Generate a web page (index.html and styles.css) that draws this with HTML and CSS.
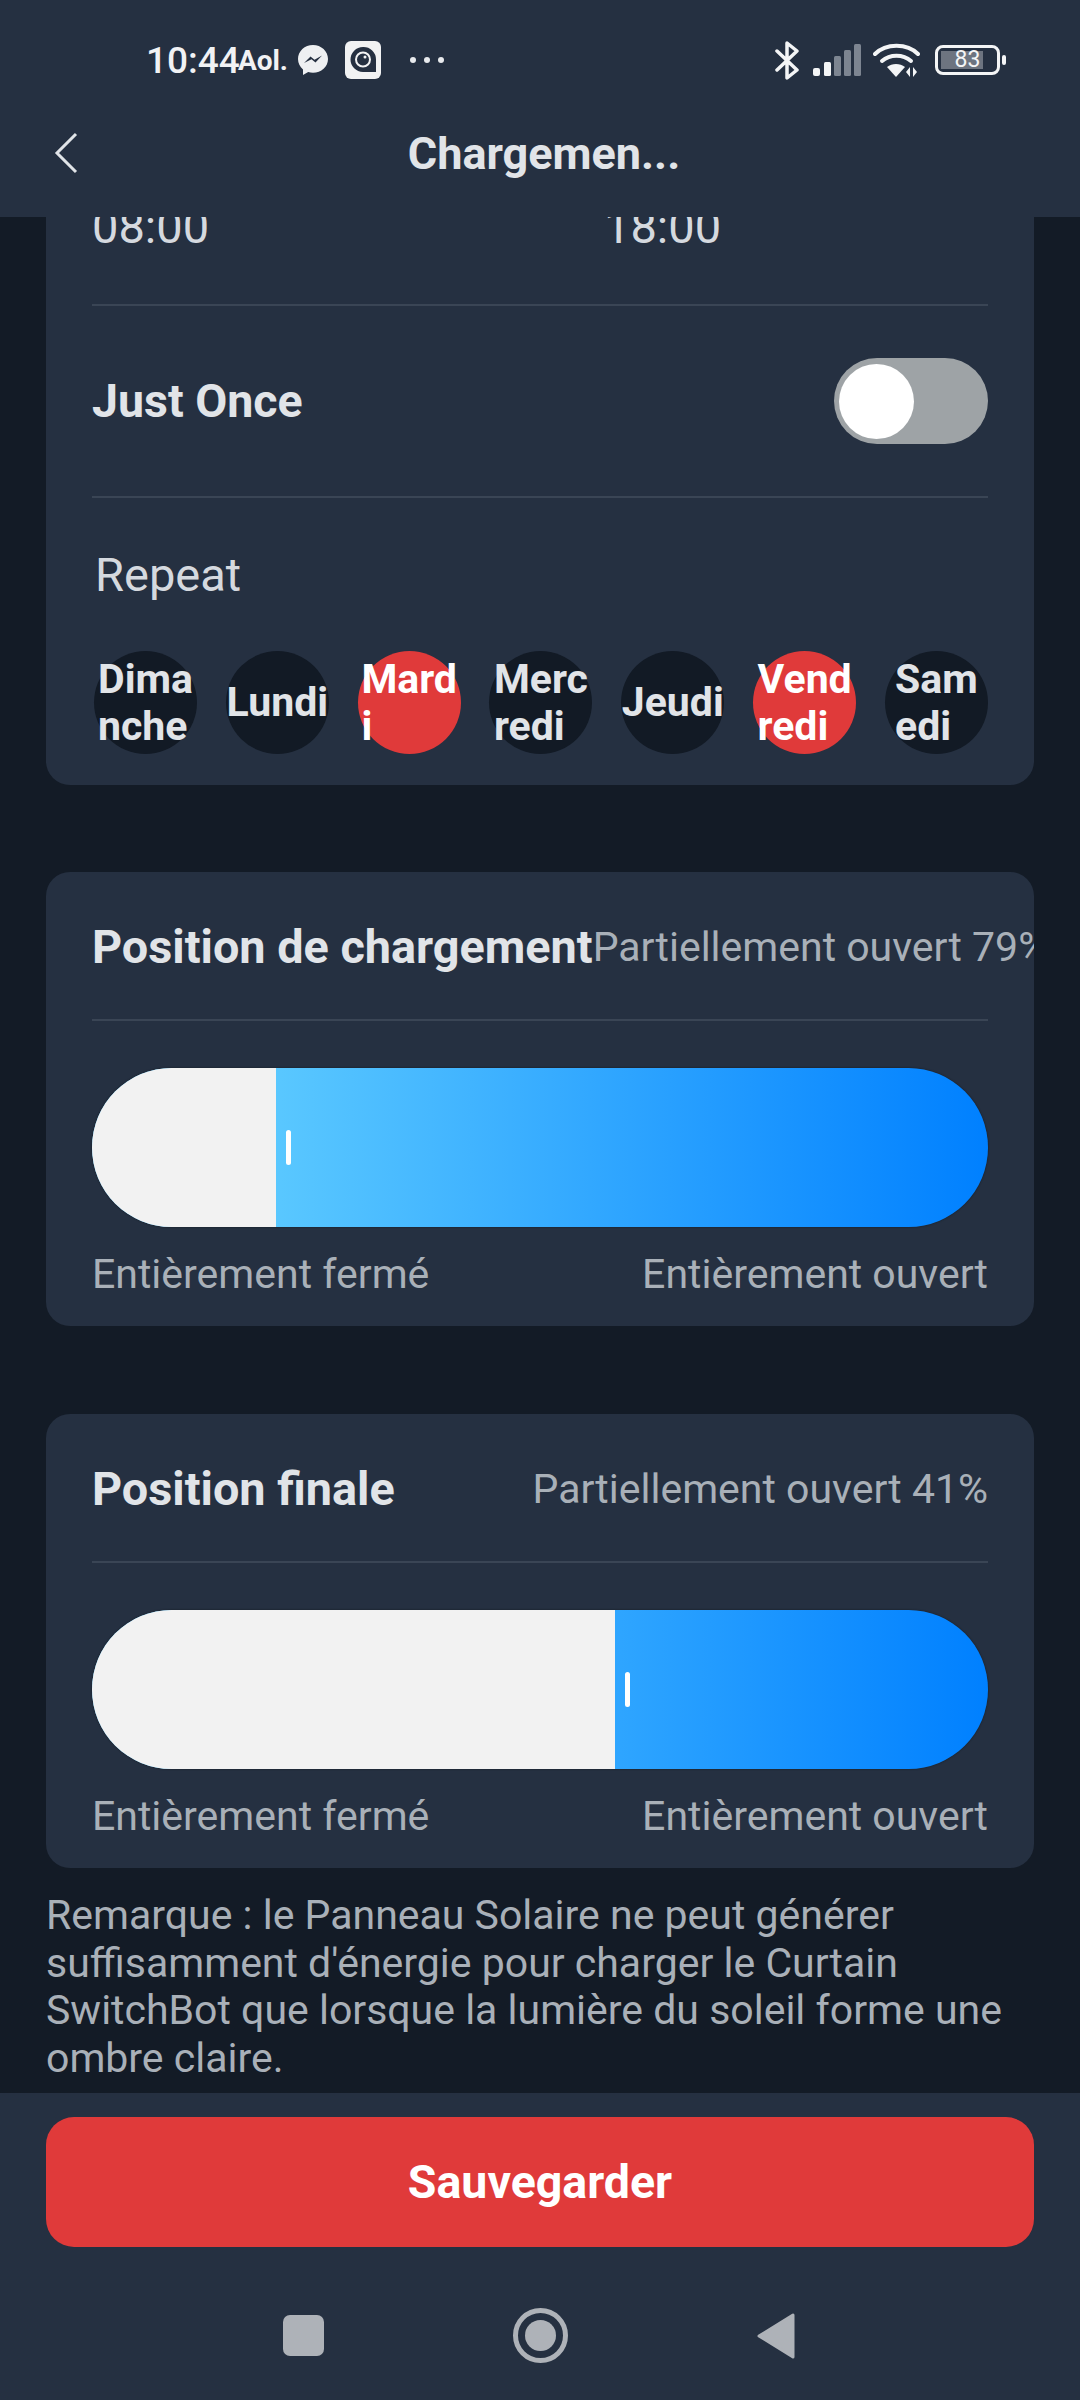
FILE: index.html
```html
<!DOCTYPE html>
<html lang="fr">
    <head>
        <meta charset="UTF-8" />
        <meta name="viewport" content="width=device-width, initial-scale=1.0" />
        <title>Chargement</title>
        <link rel="stylesheet" href="styles.css">
    </head>
    <body>
        <header class="top">
            <div class="status">
                <span class="clock">10:44</span>
                <span class="aol">Aol.</span>
                <svg class="ic-messenger" viewBox="0 0 32 32">
                    <path d="M16 1C7.7 1 1 7.2 1 15c0 4.2 1.9 7.800 5 10.400V31l5.200-2.900c1.500.5 3.100.7 4.800.7 8.300 0 15-6.100 15-13.800S24.300 1 16 1z" fill="#eef0f2"/>
                    <path d="M7 19l6.500-6.500 4 3.300L25 11.500l-6.500 7-4-3.300z" fill="#253041"/>
                </svg>
                <svg class="ic-app" viewBox="0 0 36 38">
                    <rect width="36" height="38" rx="6" fill="#f1f2f3"/>
                    <path d="M18 6a12.500 12.500 0 1 0 0 25h13V18.500A12.500 12.500 0 0 0 18 6z" fill="#253041"/>
                    <circle cx="18" cy="18.500" r="7" fill="none" stroke="#f1f2f3" stroke-width="2"/>
                    <circle cx="20" cy="16" r="1.500" fill="#f1f2f3"/>
                </svg>
                <span class="dots"><i></i><i></i><i></i></span>
                <span class="status-right">
                    <svg class="ic-bt" viewBox="0 0 25 39">
                        <path d="M2 10l20 19-10 8V2l10 8L2 29" fill="none" stroke="#f4f5f6" stroke-width="3.500" stroke-linejoin="round" stroke-linecap="round"/>
                    </svg>
                    <svg class="ic-signal" viewBox="0 0 48 32">
                        <rect x="0" y="24" width="7" height="8" rx="2" fill="#f4f5f6"/>
                        <rect x="11" y="18" width="7" height="14" rx="1.500" fill="#f4f5f6"/>
                        <rect x="21" y="12" width="7" height="20" rx="1.500" fill="#7d8591"/>
                        <rect x="31" y="6" width="7" height="26" rx="1.500" fill="#7d8591"/>
                        <rect x="41" y="0" width="7" height="32" rx="1.500" fill="#7d8591"/>
                    </svg>
                    <svg class="ic-wifi" viewBox="0 0 47 36">
                        <g fill="none" stroke="#f4f5f6" stroke-width="4" stroke-linecap="round">
                            <path d="M2 12C13 1 34 1 45 12"/>
                            <path d="M9 19c8-7 21-7 29 0"/>
                        </g>
                        <path d="M14 25c5-4 13-4 18 0l-9 10z" fill="#f4f5f6"/>
                        <path d="M37 25v10l-4-5zM40 25v10l4-5z" fill="#f4f5f6"/>
                    </svg>
                    <span class="battery"><span class="battery-level">83</span></span>
                    <span class="battery-nub"></span>
                </span>
            </div>
            <div class="bar">
                <svg class="back" viewBox="0 0 24 42">
                    <path d="M22 2L3 21l19 19" fill="none" stroke="#e1e4e8" stroke-width="3"/>
                </svg>
                <h1>Chargemen...</h1>
            </div>
        </header>

        <main class="scroll">
            <section class="card card-first">
                <div class="times">
                    <span>08:00</span>
                    <span>18:00</span>
                </div>
                <div class="once">
                    <span class="once-label">Just Once</span>
                    <span class="toggle"><span class="knob"></span></span>
                </div>
                <div class="repeat">Repeat</div>
                <div class="days">
                    <span class="day"><span>Dima<br>nche</span></span>
                    <span class="day"><span>Lundi</span></span>
                    <span class="day on"><span>Mard<br>i</span></span>
                    <span class="day"><span>Merc<br>redi</span></span>
                    <span class="day"><span>Jeudi</span></span>
                    <span class="day on"><span>Vend<br>redi</span></span>
                    <span class="day"><span>Sam<br>edi</span></span>
                </div>
            </section>

            <section class="card">
                <div class="pos-head">
                    <span class="pos-title">Position de chargement</span>
                    <span class="pos-value">Partiellement ouvert 79%</span>
                </div>
                <div class="slider">
                    <div class="slider-closed" style="width: 184px"></div>
                    <div class="handle"></div>
                </div>
                <div class="slider-labels">
                    <span>Entièrement fermé</span>
                    <span>Entièrement ouvert</span>
                </div>
            </section>

            <section class="card">
                <div class="pos-head">
                    <span class="pos-title">Position finale</span>
                    <span class="pos-value">Partiellement ouvert 41%</span>
                </div>
                <div class="slider">
                    <div class="slider-closed" style="width: 523px"></div>
                    <div class="handle"></div>
                </div>
                <div class="slider-labels">
                    <span>Entièrement fermé</span>
                    <span>Entièrement ouvert</span>
                </div>
            </section>

            <p class="note">Remarque : le Panneau Solaire ne peut générer suffisamment d'énergie pour charger le Curtain SwitchBot que lorsque la lumière du soleil forme une ombre claire.</p>
        </main>

        <footer class="bottom">
            <button class="save">Sauvegarder</button>
            <div class="nav">
                <span class="nav-square"></span>
                <span class="nav-home"><span></span></span>
                <svg class="nav-back" viewBox="0 0 38 46">
                    <path d="M36 2v42L2 23z" fill="#aeb2b8" stroke="#aeb2b8" stroke-width="3" stroke-linejoin="round"/>
                </svg>
            </div>
        </footer>
    </body>
</html>
```

FILE: styles.css
```css
* {
    box-sizing: border-box;
}
html, body {
    margin: 0;
    height: 2400px;
}
body {
    font-family: Roboto, "Liberation Sans", sans-serif;
    background: #131b26;
    color: #e1e4e8;
    display: flex;
    flex-direction: column;
    overflow: hidden;
}

/* status bar + title */
.top {
    background: #253041;
    height: 217px;
    flex: none;
    position: relative;
    z-index: 1;
}
.status {
    height: 120px;
    padding-left: 146px;
    display: flex;
    align-items: center;
    color: #f1f2f4;
}
.clock {
    font-size: 37px;
    font-weight: 500;
    width: 92px;
}
.aol {
    font-size: 28px;
    font-weight: 700;
    width: 59px;
}
.ic-messenger {
    width: 32px;
    height: 32px;
}
.ic-app {
    width: 36px;
    height: 38px;
    margin-left: 16px;
}
.dots {
    display: flex;
    gap: 8px;
    margin-left: 29px;
}
.dots i {
    width: 6px;
    height: 6px;
    border-radius: 50%;
    background: #e8eaed;
}
.status-right {
    display: flex;
    align-items: center;
    margin-left: 331px;
}
.ic-bt {
    width: 25px;
    height: 39px;
}
.ic-signal {
    width: 48px;
    height: 32px;
    margin-left: 13px;
}
.ic-wifi {
    width: 47px;
    height: 36px;
    margin-left: 12px;
}
.battery {
    width: 65px;
    height: 30px;
    margin-left: 15px;
    border: 3px solid #f4f5f6;
    border-radius: 8px;
    padding: 3px;
    display: flex;
}
.battery-level {
    width: 53px;
    background: linear-gradient(90deg, #6d7480 42px, transparent 42px);
    font-size: 23px;
    line-height: 18px;
    text-align: center;
    color: #f4f5f6;
}
.battery-nub {
    width: 4px;
    height: 10px;
    margin-left: 2px;
    border-radius: 2px;
    background: #f4f5f6;
}
.bar {
    height: 66px;
    display: flex;
    align-items: center;
    justify-content: center;
    position: relative;
}
.back {
    position: absolute;
    left: 54px;
    top: 12px;
    width: 24px;
    height: 42px;
}
h1 {
    margin: 0;
    padding-left: 8px;
    font-size: 45px;
    font-weight: 700;
    color: #e1e4e8;
}

/* scrolled content */
.scroll {
    flex: 1;
    min-height: 0;
    padding: 0 46px;
}
.card {
    background: #253041;
    border-radius: 24px;
    margin-bottom: 88px;
    padding: 0 46px 28px;
    overflow: hidden;
}
.card-first {
    margin-top: -40px;
    padding-bottom: 31px;
    margin-bottom: 87px;
}
.card:nth-of-type(3) {
    margin-bottom: 0;
}
.times {
    height: 129px;
    padding-top: 24px;
    border-bottom: 2px solid #3a4555;
    display: grid;
    grid-template-columns: 512px 1fr;
    font-size: 47px;
    line-height: 52px;
    color: #d5d9df;
}
.once {
    height: 192px;
    border-bottom: 2px solid #3a4555;
    display: flex;
    align-items: center;
    justify-content: space-between;
}
.once-label {
    font-size: 46.500px;
    font-weight: 700;
}
.toggle {
    width: 154px;
    height: 86px;
    border-radius: 43px;
    background: #9ea3a6;
    padding: 6px 5px;
}
.knob {
    display: block;
    width: 75px;
    height: 75px;
    border-radius: 50%;
    background: #fff;
}
.repeat {
    padding: 52px 0 0 3px;
    font-size: 47px;
    line-height: 50px;
    color: #d5d9df;
}
.days {
    margin-top: 51px;
    display: flex;
    justify-content: space-between;
    margin-left: 2px;
}
.day {
    width: 103px;
    height: 103px;
    border-radius: 50%;
    background: #121a25;
    display: flex;
    align-items: center;
    justify-content: center;
    font-size: 41px;
    font-weight: 700;
    line-height: 47px;
    white-space: nowrap;
}
.day.on {
    background: #e03a3a;
    color: #fff;
}
.pos-head {
    height: 149px;
    padding-top: 2px;
    border-bottom: 2px solid #3a4555;
    display: flex;
    align-items: center;
    justify-content: space-between;
    white-space: nowrap;
}
.pos-title {
    font-size: 46.800px;
    font-weight: 700;
}
.pos-value {
    font-size: 41px;
    color: #a9b0b8;
}
.slider {
    margin-top: 47px;
    height: 159px;
    border-radius: 80px;
    overflow: hidden;
    display: flex;
    align-items: center;
    background: linear-gradient(90deg, #5ac8ff 20%, #0080ff 100%);
    box-shadow: 0 0 2px #111820;
}
.slider-closed {
    height: 100%;
    background: #f2f2f2;
}
.handle {
    width: 5px;
    height: 35px;
    margin-left: 10px;
    border-radius: 3px;
    background: #fff;
}
.slider-labels {
    margin-top: 23px;
    display: flex;
    justify-content: space-between;
    font-size: 41px;
    line-height: 48px;
    color: #a9b0b8;
}
.note {
    margin: 24px 0 0;
    font-size: 41px;
    line-height: 47.700px;
    color: #a9b0b8;
}

/* save button + android nav */
.bottom {
    flex: none;
    height: 307px;
    background: #253041;
    padding: 24px 46px 0;
    position: relative;
}
.save {
    display: block;
    width: 100%;
    height: 130px;
    border: none;
    border-radius: 28px;
    background: #e03a3a;
    color: #fff;
    font-family: inherit;
    font-size: 46.500px;
    font-weight: 700;
}
.nav {
    margin-top: 61px;
    padding-right: 2px;
    display: flex;
    justify-content: center;
    align-items: center;
    gap: 189px;
}
.nav-square {
    width: 41px;
    height: 41px;
    border-radius: 7px;
    background: #aeb2b8;
}
.nav-home {
    width: 55px;
    height: 55px;
    border: 5px solid #aeb2b8;
    border-radius: 50%;
    display: flex;
    align-items: center;
    justify-content: center;
}
.nav-home span {
    width: 31px;
    height: 31px;
    border-radius: 50%;
    background: #aeb2b8;
}
.nav-back {
    width: 38px;
    height: 46px;
}
```
